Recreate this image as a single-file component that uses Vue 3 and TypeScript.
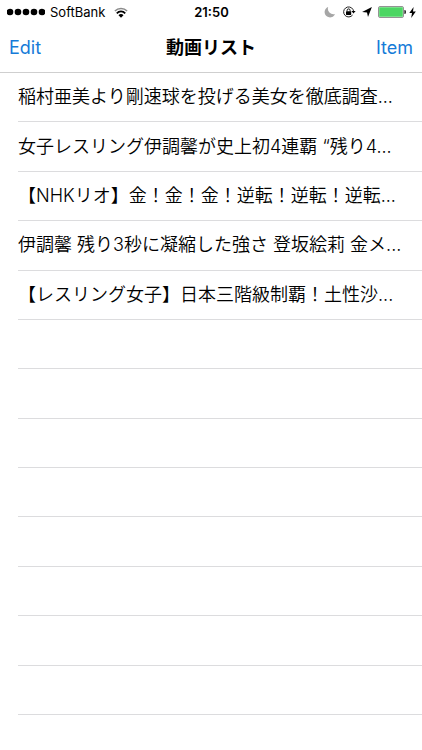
<script setup lang="ts">
const carrier = 'SoftBank'
const time = '21:50'
const title = '動画リスト'

const videos: string[] = [
  '稲村亜美より剛速球を投げる美女を徹底調査...',
  '女子レスリング伊調馨が史上初4連覇 “残り4...',
  '【NHKリオ】金！金！金！逆転！逆転！逆転...',
  '伊調馨 残り3秒に凝縮した強さ 登坂絵莉 金メ...',
  '【レスリング女子】日本三階級制覇！土性沙...',
]
const visibleRows = 13
const emptyRows = visibleRows - videos.length
</script>

<template>
  <div class="screen">
    <header class="top">
      <div class="status">
        <div class="status-left">
          <svg class="signal" viewBox="0 0 38 8" aria-hidden="true">
            <circle v-for="n in 5" :key="n" :cx="n * 8 - 5" cy="4" r="3.3" />
          </svg>
          <span>{{ carrier }}</span>
          <svg class="wifi" viewBox="0 0 14 11" aria-hidden="true">
            <path d="M0.9 4.1A8.4 8.4 0 0 1 13.1 4.1" fill="none" stroke="#8a8a8a" stroke-width="1.5" />
            <path d="M2.8 6.3A5.7 5.7 0 0 1 11.2 6.3" fill="none" stroke="#000" stroke-width="1.8" />
            <path d="M4.5 8.2A3.4 3.4 0 0 1 9.5 8.2L7 10.7Z" />
          </svg>
        </div>
        <span class="time">{{ time }}</span>
        <div class="status-right">
          <svg class="moon" viewBox="0 0 12 12" aria-hidden="true">
            <path d="M4.2 0.9A5.4 5.4 0 1 0 11 8.1A5.6 5.6 0 0 1 4.2 0.9Z" fill="#a6a6a6" />
          </svg>
          <svg class="lock" viewBox="0 0 14 12" aria-hidden="true">
            <path d="M10.6 9A5 5 0 1 1 11 3.5L11.6 5.2" fill="none" stroke="#222" stroke-width="1" />
            <path d="M9.4 5H13.6L11.5 7.6Z" />
            <rect x="4" y="5.3" width="5.2" height="3.7" rx="0.4" />
            <path d="M5.1 5.5V4.4A1.5 1.5 0 0 1 8.1 4.4V5.5" fill="none" stroke="#111" stroke-width="1" />
          </svg>
          <svg class="arrow" viewBox="0 0 10 10" aria-hidden="true">
            <path d="M9.9 0.1L6 9.9L5 5.5L0.1 5Z" />
          </svg>
          <svg class="battery" viewBox="0 0 28 12" aria-hidden="true">
            <rect x="0.5" y="0.5" width="25" height="11" rx="1.5" fill="#fff" stroke="#777" stroke-width="0.8" />
            <rect x="1.2" y="1.2" width="23.6" height="9.6" rx="0.5" fill="#4cd663" />
            <path d="M26.3 4A2 2 0 0 1 26.3 8Z" fill="#333" />
          </svg>
          <svg class="bolt" viewBox="0 0 7 11" aria-hidden="true">
            <path d="M4.6 0L0.3 6H3L2.2 11L6.8 4.6H4Z" />
          </svg>
        </div>
      </div>
      <nav class="bar">
        <button type="button" class="action">Edit</button>
        <h1 class="title">{{ title }}</h1>
        <button type="button" class="action action-end">Item</button>
      </nav>
    </header>
    <ul class="list">
      <li v-for="video in videos" :key="video" class="row">
        <span class="label">{{ video }}</span>
      </li>
      <li v-for="n in emptyRows" :key="n" class="row" aria-hidden="true"></li>
    </ul>
  </div>
</template>

<style>
body {
  background: #fff;
}
</style>

<style scoped>
.screen {
  display: flex;
  flex-direction: column;
  min-height: 100vh;
  box-sizing: border-box;
  padding-bottom: 35px;
  background: #fff;
  color: #000;
  font-family: Inter, "Noto Sans CJK JP", sans-serif;
}
.top {
  border-bottom: 1px solid #cfcfcf;
}
.status,
.bar {
  display: grid;
  grid-template-columns: 1fr auto 1fr;
  align-items: center;
}
.status {
  height: 24px;
  padding: 0 6px 0 7px;
  font-size: 13px;
  line-height: 24px;
}
.status-left,
.status-right {
  display: flex;
  align-items: center;
}
.status-left {
  gap: 5px;
}
.status-right {
  justify-content: flex-end;
}
.time {
  font-weight: 600;
}
.signal {
  width: 38px;
  height: 8px;
}
.wifi {
  width: 14px;
  height: 11px;
  margin-left: 4px;
}
.moon {
  width: 12px;
  height: 12px;
  margin-right: 6px;
}
.lock {
  width: 14px;
  height: 12px;
  margin-right: 6px;
}
.arrow {
  width: 10px;
  height: 10px;
  margin-right: 6px;
}
.battery {
  width: 28px;
  height: 12px;
  margin-right: 3px;
}
.bolt {
  width: 7px;
  height: 11px;
}
.bar {
  height: 48px;
  padding: 0 9px;
}
.action {
  justify-self: start;
  padding: 0;
  border: 0;
  background: none;
  color: #157bd8;
  font: inherit;
  font-size: 18px;
  line-height: 24px;
  cursor: pointer;
}
.action-end {
  justify-self: end;
}
.title {
  margin: 0;
  font-size: 18px;
  font-weight: 700;
  line-height: 24px;
}
.list {
  flex: 1;
  display: grid;
  grid-auto-rows: 1fr;
  margin: 0;
  padding: 0 0 0 18px;
  list-style: none;
}
.row {
  display: flex;
  align-items: center;
  min-width: 0;
  min-height: 44px;
  box-sizing: border-box;
  border-bottom: 1px solid #dcdcde;
}
.label {
  overflow: hidden;
  font-size: 18px;
  font-weight: 350;
  line-height: 26px;
  white-space: nowrap;
}
</style>
